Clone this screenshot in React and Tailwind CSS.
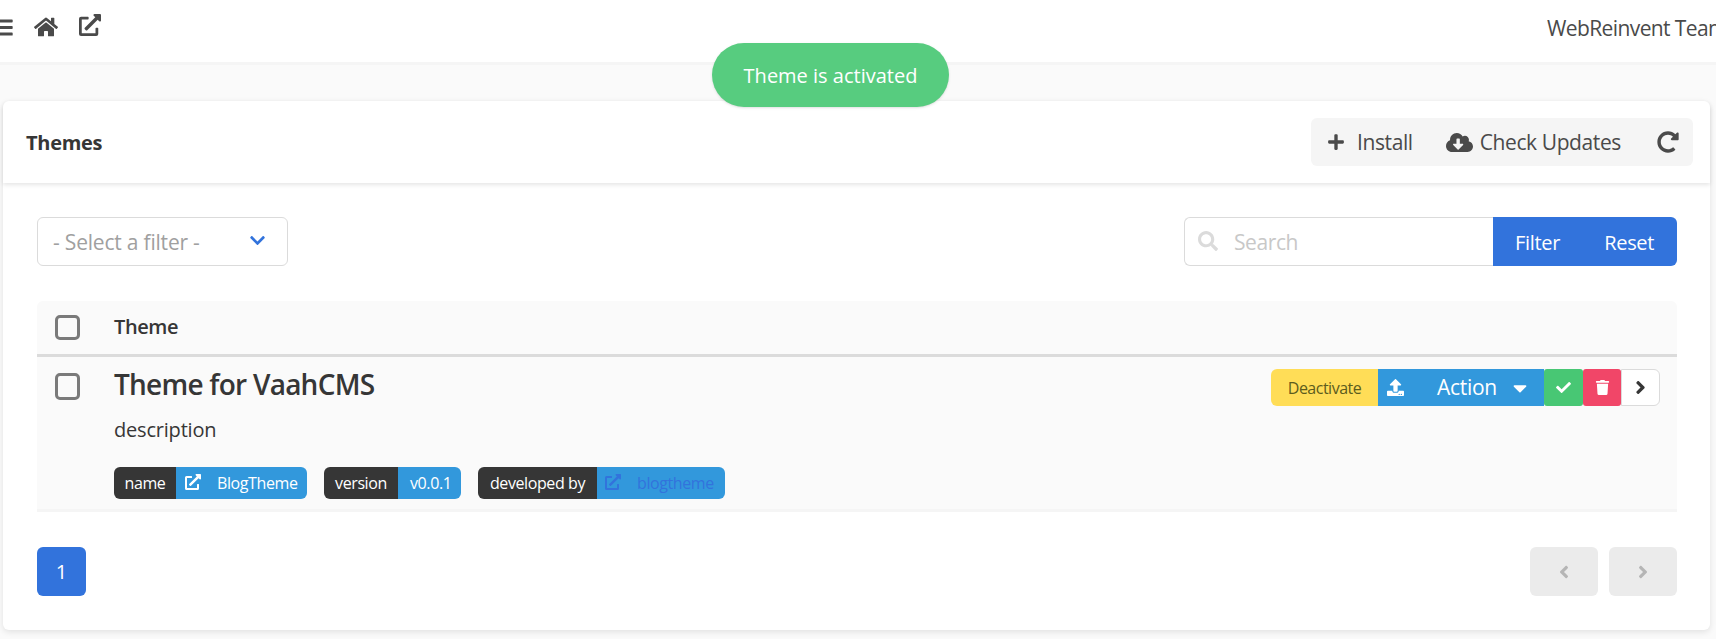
import { FaBars, FaHome, FaExternalLinkAlt, FaPlus, FaCloudDownloadAlt, FaRedoAlt, FaChevronDown, FaSearch, FaUpload, FaCaretDown, FaCheck, FaTrash, FaAngleRight, FaAngleLeft } from "react-icons/fa";

function Tag({ label, children, labelW, valueW }) {
  return (
    <div className="flex h-8 rounded-md overflow-hidden text-[16px] tracking-[-0.4px] text-white">
      <span className={`flex items-center justify-center bg-[#363636] ${labelW}`}>{label}</span>
      <span className={`flex items-center bg-[#3298dc] ${valueW}`}>{children}</span>
    </div>
  );
}

function Checkbox({ size }) {
  return <span className={`block w-[25px] rounded-[5px] border-[3px] border-[#7a7a7a] bg-[#fafafa] ${size}`}></span>;
}

export default function App() {
  return (
    <div className="relative h-[639px] overflow-hidden bg-[#fafafa] text-[#363636] font-['Open_Sans',sans-serif]">
      {/* NAVBAR */}
      <div className="flex items-start justify-between h-[65px] bg-white border-b-[3px] border-[#f5f5f5]">
        <div className="flex items-center gap-[22px] pt-[15px] text-[#4a4a4a] -ml-[7px]">
          <FaBars className="text-[21px]" />
          <FaHome className="text-[24px] -ml-[2px]" />
          <FaExternalLinkAlt className="text-[22px] -ml-[1px] -mt-[4px]" />
        </div>
        <div className="w-[169px] pt-[13px] text-[21px] tracking-[-0.6px] whitespace-nowrap text-[#4a4a4a] overflow-hidden">WebReinvent Team</div>
      </div>

      {/* TOAST */}
      <div className="absolute left-[712px] top-[43px] w-[237px] h-[64px] pt-[2px] rounded-full bg-[#57cc7f] text-white text-[20px] flex items-center justify-center shadow-sm">
        Theme is activated
      </div>

      {/* CARD */}
      <div className="mt-[36px] ml-[3px] mr-[6px] h-[529px] bg-white rounded-md shadow-[0_2px_6px_rgba(10,10,10,0.1)]">
        <div className="flex items-center justify-between h-[82px] pl-[23px] pr-[17px] rounded-t-md shadow-[0_2px_4px_rgba(10,10,10,0.1)]">
          <h1 className="pt-[2px] text-[20px] font-bold tracking-[-0.3px]">Themes</h1>
          <div className="flex items-center h-12 w-[382px] rounded-md bg-[#f5f5f5] text-[21px] tracking-[-0.4px] text-[#4a4a4a]">
            <FaPlus className="ml-4 text-[18px]" />
            <span className="ml-[12px] pt-[2px]">Install</span>
            <FaCloudDownloadAlt className="ml-[33px] text-[27px]" />
            <span className="ml-[7px] pt-[2px]">Check Updates</span>
            <FaRedoAlt className="ml-auto mr-[14px] text-[22px]" />
          </div>
        </div>

        <div className="pl-[34px] pr-[33px] pt-[34px]">
          {/* FILTERS */}
          <div className="flex items-center justify-between">
            <div className="flex items-center justify-between w-[251px] h-[49px] px-[15px] rounded-md border border-[#dbdbdb] bg-white text-[21px] tracking-[-0.2px] text-[#a0a0a0]">
              <span className="pt-[3px]">- Select a filter -</span>
              <FaChevronDown className="text-[#3273dc] text-[17px] mr-[6px] -mt-[3px]" />
            </div>
            <div className="flex h-[49px]">
              <div className="relative flex items-center w-[309px] pl-[49px] pt-[3px] rounded-l-md border border-r-0 border-[#dbdbdb] bg-white text-[21px] tracking-[-0.4px] text-[#c8c8c8]">
                <FaSearch className="absolute left-[13px] top-[13px] text-[20px] text-[#dbdbdb]" />
                Search
              </div>
              <div className="flex items-center w-[184px] pt-[2px] rounded-r-md bg-[#3273dc] text-white text-[20px] tracking-[-0.3px]">
                <span className="ml-[22px]">Filter</span>
                <span className="ml-[44px]">Reset</span>
              </div>
            </div>
          </div>

          {/* TABLE */}
          <div className="mt-[35px] rounded-t-md bg-[#fafafa]">
            <div className="flex items-center h-[56px] pl-[18px] border-b-[3px] border-[#dbdbdb]">
              <Checkbox size="h-[25px]" />
              <span className="ml-[34px] text-[20px] font-semibold tracking-[-0.4px] -mt-[2px]">Theme</span>
            </div>
            <div className="relative flex h-[155px] pl-[18px] border-b-[3px] border-[#f5f5f5]">
              <div className="pt-[16px]"><Checkbox size="h-[27px]" /></div>
              <div className="ml-[34px]">
                <h2 className="mt-[8px] text-[28px] leading-[38px] font-semibold tracking-[-0.75px]">Theme for VaahCMS</h2>
                <p className="mt-[12px] text-[20px] leading-[30px] tracking-[-0.2px]">description</p>
                <div className="flex gap-[17px] mt-[22px] items-center">
                  <Tag label="name" labelW="w-[62px]" valueW="w-[131px]">
                    <FaExternalLinkAlt className="ml-[9px] -mt-[3px] text-[16px]" />
                    <span className="ml-[16px]">BlogTheme</span>
                  </Tag>
                  <Tag label="version" labelW="w-[74px]" valueW="w-[63px]">
                    <span className="ml-[12px]">v0.0.1</span>
                  </Tag>
                  <Tag label="developed by" labelW="w-[119px]" valueW="w-[128px]">
                    <FaExternalLinkAlt className="ml-[8px] -mt-[3px] text-[16px] text-[#3273dc]" />
                    <span className="ml-[16px] text-[#3273dc]">blogtheme</span>
                  </Tag>
                </div>
              </div>

              {/* ROW ACTIONS */}
              <div className="flex items-stretch h-[37px] ml-auto mt-[12px] mr-[17px] text-white">
                <span className="flex items-center justify-center w-[107px] rounded-l-md bg-[#ffdd57] text-[16px] tracking-[-0.5px] text-[#5c5c1e]">Deactivate</span>
                <span className="flex items-center w-[166px] bg-[#3298dc] text-[21px] tracking-[-0.3px]">
                  <FaUpload className="ml-[9px] text-[17px]" />
                  <span className="ml-[33px]">Action</span>
                  <FaCaretDown className="ml-[12px] text-[22px]" />
                </span>
                <span className="flex items-center justify-center w-[39px] rounded-[3px] bg-[#48c774]"><FaCheck className="text-[15px]" /></span>
                <span className="flex items-center justify-center w-[38px] rounded-[3px] bg-[#f14668]"><FaTrash className="text-[15px]" /></span>
                <span className="flex items-center justify-center w-[39px] rounded-r-md border border-[#dbdbdb] bg-white text-[#363636]"><FaAngleRight className="text-[21px]" /></span>
              </div>
            </div>
          </div>

          {/* PAGINATION */}
          <div className="flex items-center justify-between mt-[35px]">
            <span className="flex items-center justify-center w-[49px] h-[49px] rounded-md bg-[#3273dc] text-white text-[20px]">1</span>
            <div className="flex gap-[11px] text-[#b5b5b5]">
              <span className="flex items-center justify-center w-[68px] h-[49px] rounded-md bg-[#ebebeb]"><FaAngleLeft className="text-[20px]" /></span>
              <span className="flex items-center justify-center w-[68px] h-[49px] rounded-md bg-[#ebebeb]"><FaAngleRight className="text-[20px]" /></span>
            </div>
          </div>
        </div>
      </div>
    </div>
  );
}
